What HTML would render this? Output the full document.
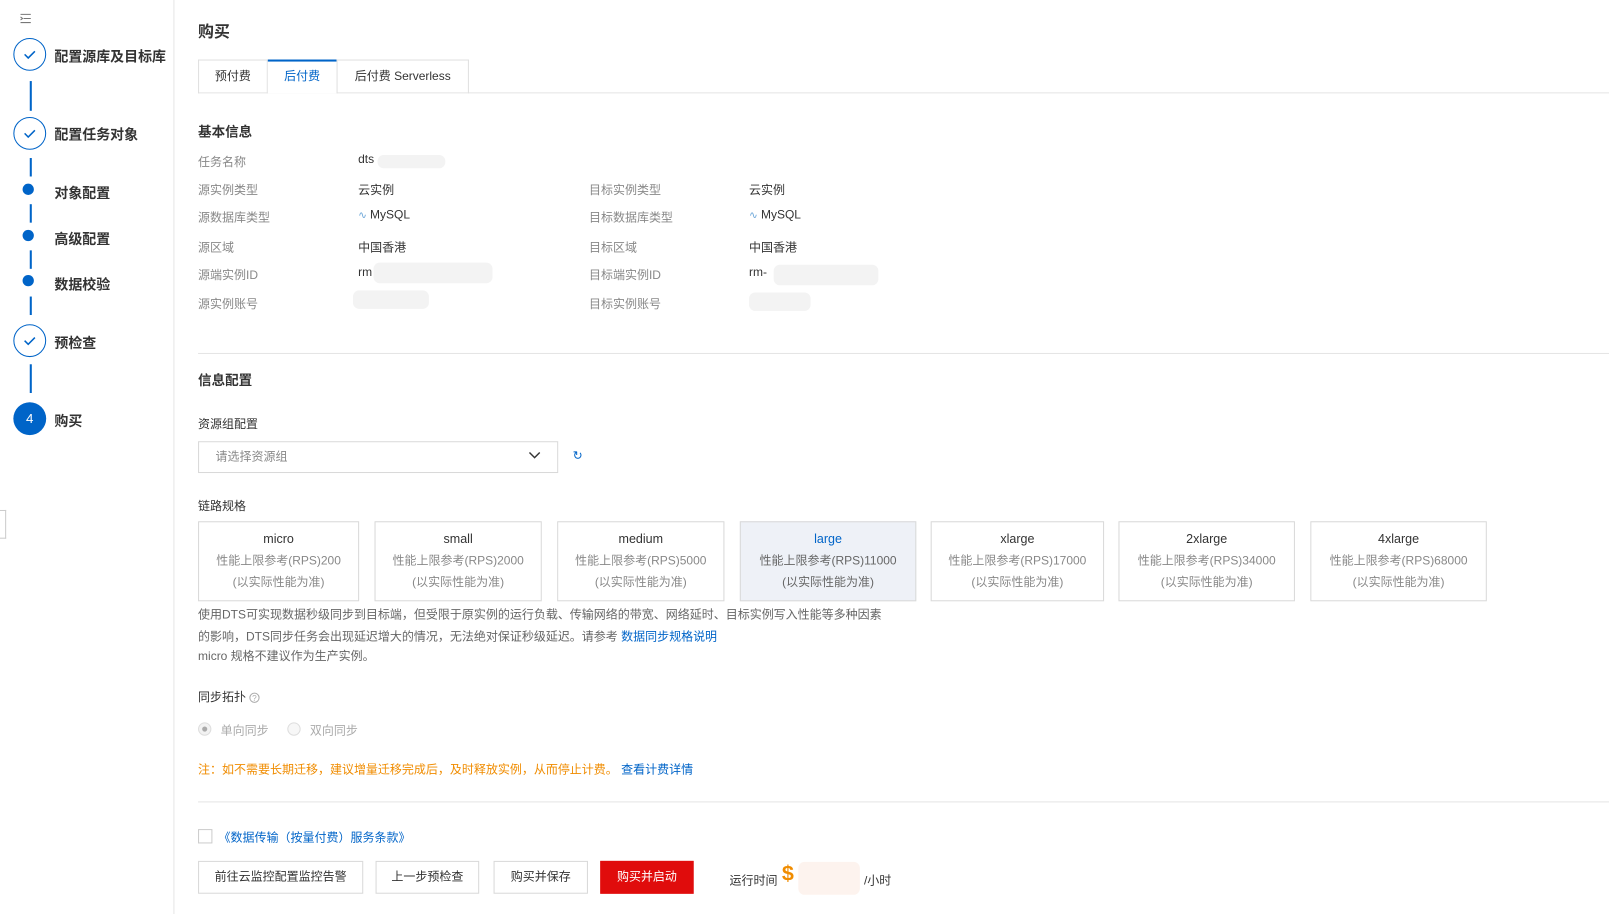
<!DOCTYPE html>
<html><head><meta charset="utf-8"><style>
*{margin:0;padding:0;box-sizing:border-box}
body{width:1609px;height:914px;background:#fff;font-family:"Liberation Sans","Noto Sans CJK SC",sans-serif;color:#333;position:relative;overflow:hidden;font-size:11.7px}
#w{position:absolute;left:0;top:0;width:1568px;height:891px;transform:scale(1.0261);transform-origin:0 0}
.a{position:absolute;white-space:nowrap}
.side{position:absolute;left:0;top:0;width:170px;height:891px;border-right:1px solid #e5e5e5}
.circ{position:absolute;left:13px;width:32px;height:32px;border:1.5px solid #0064c8;border-radius:50%}
.dot{position:absolute;left:22px;width:11px;height:11px;background:#0064c8;border-radius:50%}
.vl{position:absolute;left:29px;width:1.5px;background:#0064c8}
.st{position:absolute;left:53px;font-size:13.6px;color:#333;font-weight:bold}
.lbl{color:#888}
.val{color:#333}
.card{position:absolute;top:508px;height:78px;border:1px solid #d9d9d9;text-align:center;color:#888;line-height:21px;padding-top:6px}
.card b{display:block;font-weight:normal;color:#333;font-size:12.2px}
.btn{position:absolute;top:839px;height:32px;border:1px solid #d9d9d9;line-height:30px;text-align:center;color:#333;background:#fff}
.blur{position:absolute;background:#f3f3f3;border-radius:6px}
</style></head><body><div id="w">
<div class="side">
<svg class="a" style="left:19px;top:13px" width="12" height="10"><path d="M1 1h10M4 5h7M1 9h10M1 3.5l2 1.5-2 1.5" stroke="#777" stroke-width="1" fill="none"/></svg>
<div class="circ" style="top:37px"></div><svg class="a" style="left:22px;top:47px" width="14" height="12"><path d="M2 6l3.5 3.5L12 3" stroke="#0064c8" stroke-width="1.5" fill="none"/></svg>
<div class="st" style="top:44px">配置源库及目标库</div>
<div class="vl" style="top:79px;height:29px"></div>
<div class="circ" style="top:114px"></div><svg class="a" style="left:22px;top:124px" width="14" height="12"><path d="M2 6l3.5 3.5L12 3" stroke="#0064c8" stroke-width="1.5" fill="none"/></svg>
<div class="st" style="top:120px">配置任务对象</div>
<div class="vl" style="top:154px;height:18px"></div>
<div class="dot" style="top:179px"></div><div class="st" style="top:177px">对象配置</div>
<div class="vl" style="top:199px;height:18px"></div>
<div class="dot" style="top:224px"></div><div class="st" style="top:222px">高级配置</div>
<div class="vl" style="top:244px;height:18px"></div>
<div class="dot" style="top:268px"></div><div class="st" style="top:266px">数据校验</div>
<div class="vl" style="top:289px;height:18px"></div>
<div class="circ" style="top:316px"></div><svg class="a" style="left:22px;top:326px" width="14" height="12"><path d="M2 6l3.5 3.5L12 3" stroke="#0064c8" stroke-width="1.5" fill="none"/></svg>
<div class="st" style="top:323px">预检查</div>
<div class="vl" style="top:355px;height:28px"></div>
<div class="a" style="left:13px;top:392px;width:32px;height:32px;border-radius:50%;background:#0064c8;color:#fff;text-align:center;line-height:32px;font-size:13px">4</div>
<div class="st" style="top:399px">购买</div>
</div>
<div class="a" style="left:0;top:497px;width:6px;height:28px;border:1px solid #ccc;border-left:none;background:#fff"></div>

<div class="a" style="left:193px;top:19px;font-size:15.5px;font-weight:bold">购买</div>
<div class="a" style="left:193px;top:90px;width:1416px;height:1px;background:#e5e5e5"></div>
<div class="a" style="left:193px;top:58px;width:68px;height:33px;border:1px solid #e0e0e0;border-bottom:none;text-align:center;line-height:31px;color:#333">预付费</div>
<div class="a" style="left:261px;top:58px;width:67px;height:33px;border-top:2px solid #0064c8;background:#fff;text-align:center;line-height:30px;color:#0064c8">后付费</div>
<div class="a" style="left:328px;top:58px;width:129px;height:33px;border:1px solid #e0e0e0;border-bottom:none;text-align:center;line-height:31px;color:#333">后付费 Serverless</div>

<div class="a" style="left:193px;top:118px;font-size:13.2px;font-weight:bold">基本信息</div>
<div class="a lbl" style="left:193px;top:149px">任务名称</div><div class="a val" style="left:349px;top:149px">dts</div><div class="blur" style="left:368px;top:151px;width:66px;height:13px"></div>
<div class="a lbl" style="left:193px;top:176px">源实例类型</div><div class="a val" style="left:349px;top:176px">云实例</div>
<div class="a lbl" style="left:574px;top:176px">目标实例类型</div><div class="a val" style="left:730px;top:176px">云实例</div>
<div class="a lbl" style="left:193px;top:203px">源数据库类型</div><div class="a val" style="left:349px;top:203px"><span style="color:#6aa5d8;font-size:10px">∿</span> MySQL</div>
<div class="a lbl" style="left:574px;top:203px">目标数据库类型</div><div class="a val" style="left:730px;top:203px"><span style="color:#6aa5d8;font-size:10px">∿</span> MySQL</div>
<div class="a lbl" style="left:193px;top:232px">源区域</div><div class="a val" style="left:349px;top:232px">中国香港</div>
<div class="a lbl" style="left:574px;top:232px">目标区域</div><div class="a val" style="left:730px;top:232px">中国香港</div>
<div class="a lbl" style="left:193px;top:259px">源端实例ID</div><div class="a val" style="left:349px;top:259px">rm</div><div class="blur" style="left:364px;top:256px;width:116px;height:20px"></div>
<div class="a lbl" style="left:574px;top:259px">目标端实例ID</div><div class="a val" style="left:730px;top:259px">rm-</div><div class="blur" style="left:754px;top:258px;width:102px;height:20px"></div>
<div class="a lbl" style="left:193px;top:287px">源实例账号</div><div class="blur" style="left:344px;top:283px;width:74px;height:18px"></div>
<div class="a lbl" style="left:574px;top:287px">目标实例账号</div><div class="blur" style="left:730px;top:285px;width:60px;height:18px"></div>
<div class="a" style="left:193px;top:344px;width:1416px;height:1px;background:#e5e5e5"></div>

<div class="a" style="left:193px;top:360px;font-size:13.2px;font-weight:bold">信息配置</div>
<div class="a" style="left:193px;top:404px">资源组配置</div>
<div class="a" style="left:193px;top:430px;width:351px;height:31px;border:1px solid #d9d9d9;color:#888;line-height:29px;padding-left:16px">请选择资源组</div>
<svg class="a" style="left:514px;top:439px" width="14" height="10"><path d="M2 2l5 5 5-5" stroke="#333" stroke-width="1.4" fill="none"/></svg>
<div class="a" style="left:558px;top:437px;color:#0064c8">↻</div>

<div class="a" style="left:193px;top:484px">链路规格</div>
<div class="card" style="left:193px;width:157px"><b>micro</b>性能上限参考(RPS)200<br>(以实际性能为准)</div>
<div class="card" style="left:365px;width:163px"><b>small</b>性能上限参考(RPS)2000<br>(以实际性能为准)</div>
<div class="card" style="left:543px;width:163px"><b>medium</b>性能上限参考(RPS)5000<br>(以实际性能为准)</div>
<div class="card" style="left:721px;width:172px;background:#eef1f7;color:#666"><b style="color:#0064c8">large</b>性能上限参考(RPS)11000<br>(以实际性能为准)</div>
<div class="card" style="left:907px;width:169px"><b>xlarge</b>性能上限参考(RPS)17000<br>(以实际性能为准)</div>
<div class="card" style="left:1090px;width:172px"><b>2xlarge</b>性能上限参考(RPS)34000<br>(以实际性能为准)</div>
<div class="card" style="left:1277px;width:172px"><b>4xlarge</b>性能上限参考(RPS)68000<br>(以实际性能为准)</div>
<div class="a" style="left:193px;top:589px;color:#666;line-height:21px">使用DTS可实现数据秒级同步到目标端，但受限于原实例的运行负载、传输网络的带宽、网络延时、目标实例写入性能等多种因素<br>的影响，DTS同步任务会出现延迟增大的情况，无法绝对保证秒级延迟。请参考 <span style="color:#0064c8">数据同步规格说明</span></div>
<div class="a" style="left:193px;top:630px;color:#666">micro 规格不建议作为生产实例。</div>

<div class="a" style="left:193px;top:670px">同步拓扑 <span style="display:inline-block;width:10px;height:10px;border:1px solid #aaa;border-radius:50%;font-size:8px;line-height:9px;text-align:center;color:#aaa">?</span></div>
<div class="a" style="left:193px;top:704px;width:13px;height:13px;border:1px solid #ddd;border-radius:50%;background:#f2f2f2"><div style="margin:3px;width:5px;height:5px;border-radius:50%;background:#aaa"></div></div>
<div class="a" style="left:215px;top:703px;color:#aaa">单向同步</div>
<div class="a" style="left:280px;top:704px;width:13px;height:13px;border:1px solid #ddd;border-radius:50%;background:#f7f7f7"></div>
<div class="a" style="left:302px;top:703px;color:#aaa">双向同步</div>
<div class="a" style="left:193px;top:741px;color:#f08c00">注：如不需要长期迁移，建议增量迁移完成后，及时释放实例，从而停止计费。 <span style="color:#0064c8">查看计费详情</span></div>
<div class="a" style="left:193px;top:781px;width:1416px;height:1px;background:#e5e5e5"></div>

<div class="a" style="left:193px;top:808px;width:14px;height:14px;border:1px solid #ccc"></div>
<div class="a" style="left:213px;top:807px;color:#0064c8">《数据传输（按量付费）服务条款》</div>
<div class="btn" style="left:193px;width:161px">前往云监控配置监控告警</div>
<div class="btn" style="left:366px;width:101px">上一步预检查</div>
<div class="btn" style="left:481px;width:92px">购买并保存</div>
<div class="btn" style="left:585px;width:91px;background:#e00c0c;border-color:#e00c0c;color:#fff">购买并启动</div>
<div class="a" style="left:711px;top:849px">运行时间</div>
<div class="a" style="left:762px;top:840px;color:#f08c00;font-size:21px;font-weight:bold">$</div>
<div class="blur" style="left:778px;top:840px;width:60px;height:32px;background:#fdf3ee"></div>
<div class="a" style="left:842px;top:849px">/小时</div>
</div></body></html>
